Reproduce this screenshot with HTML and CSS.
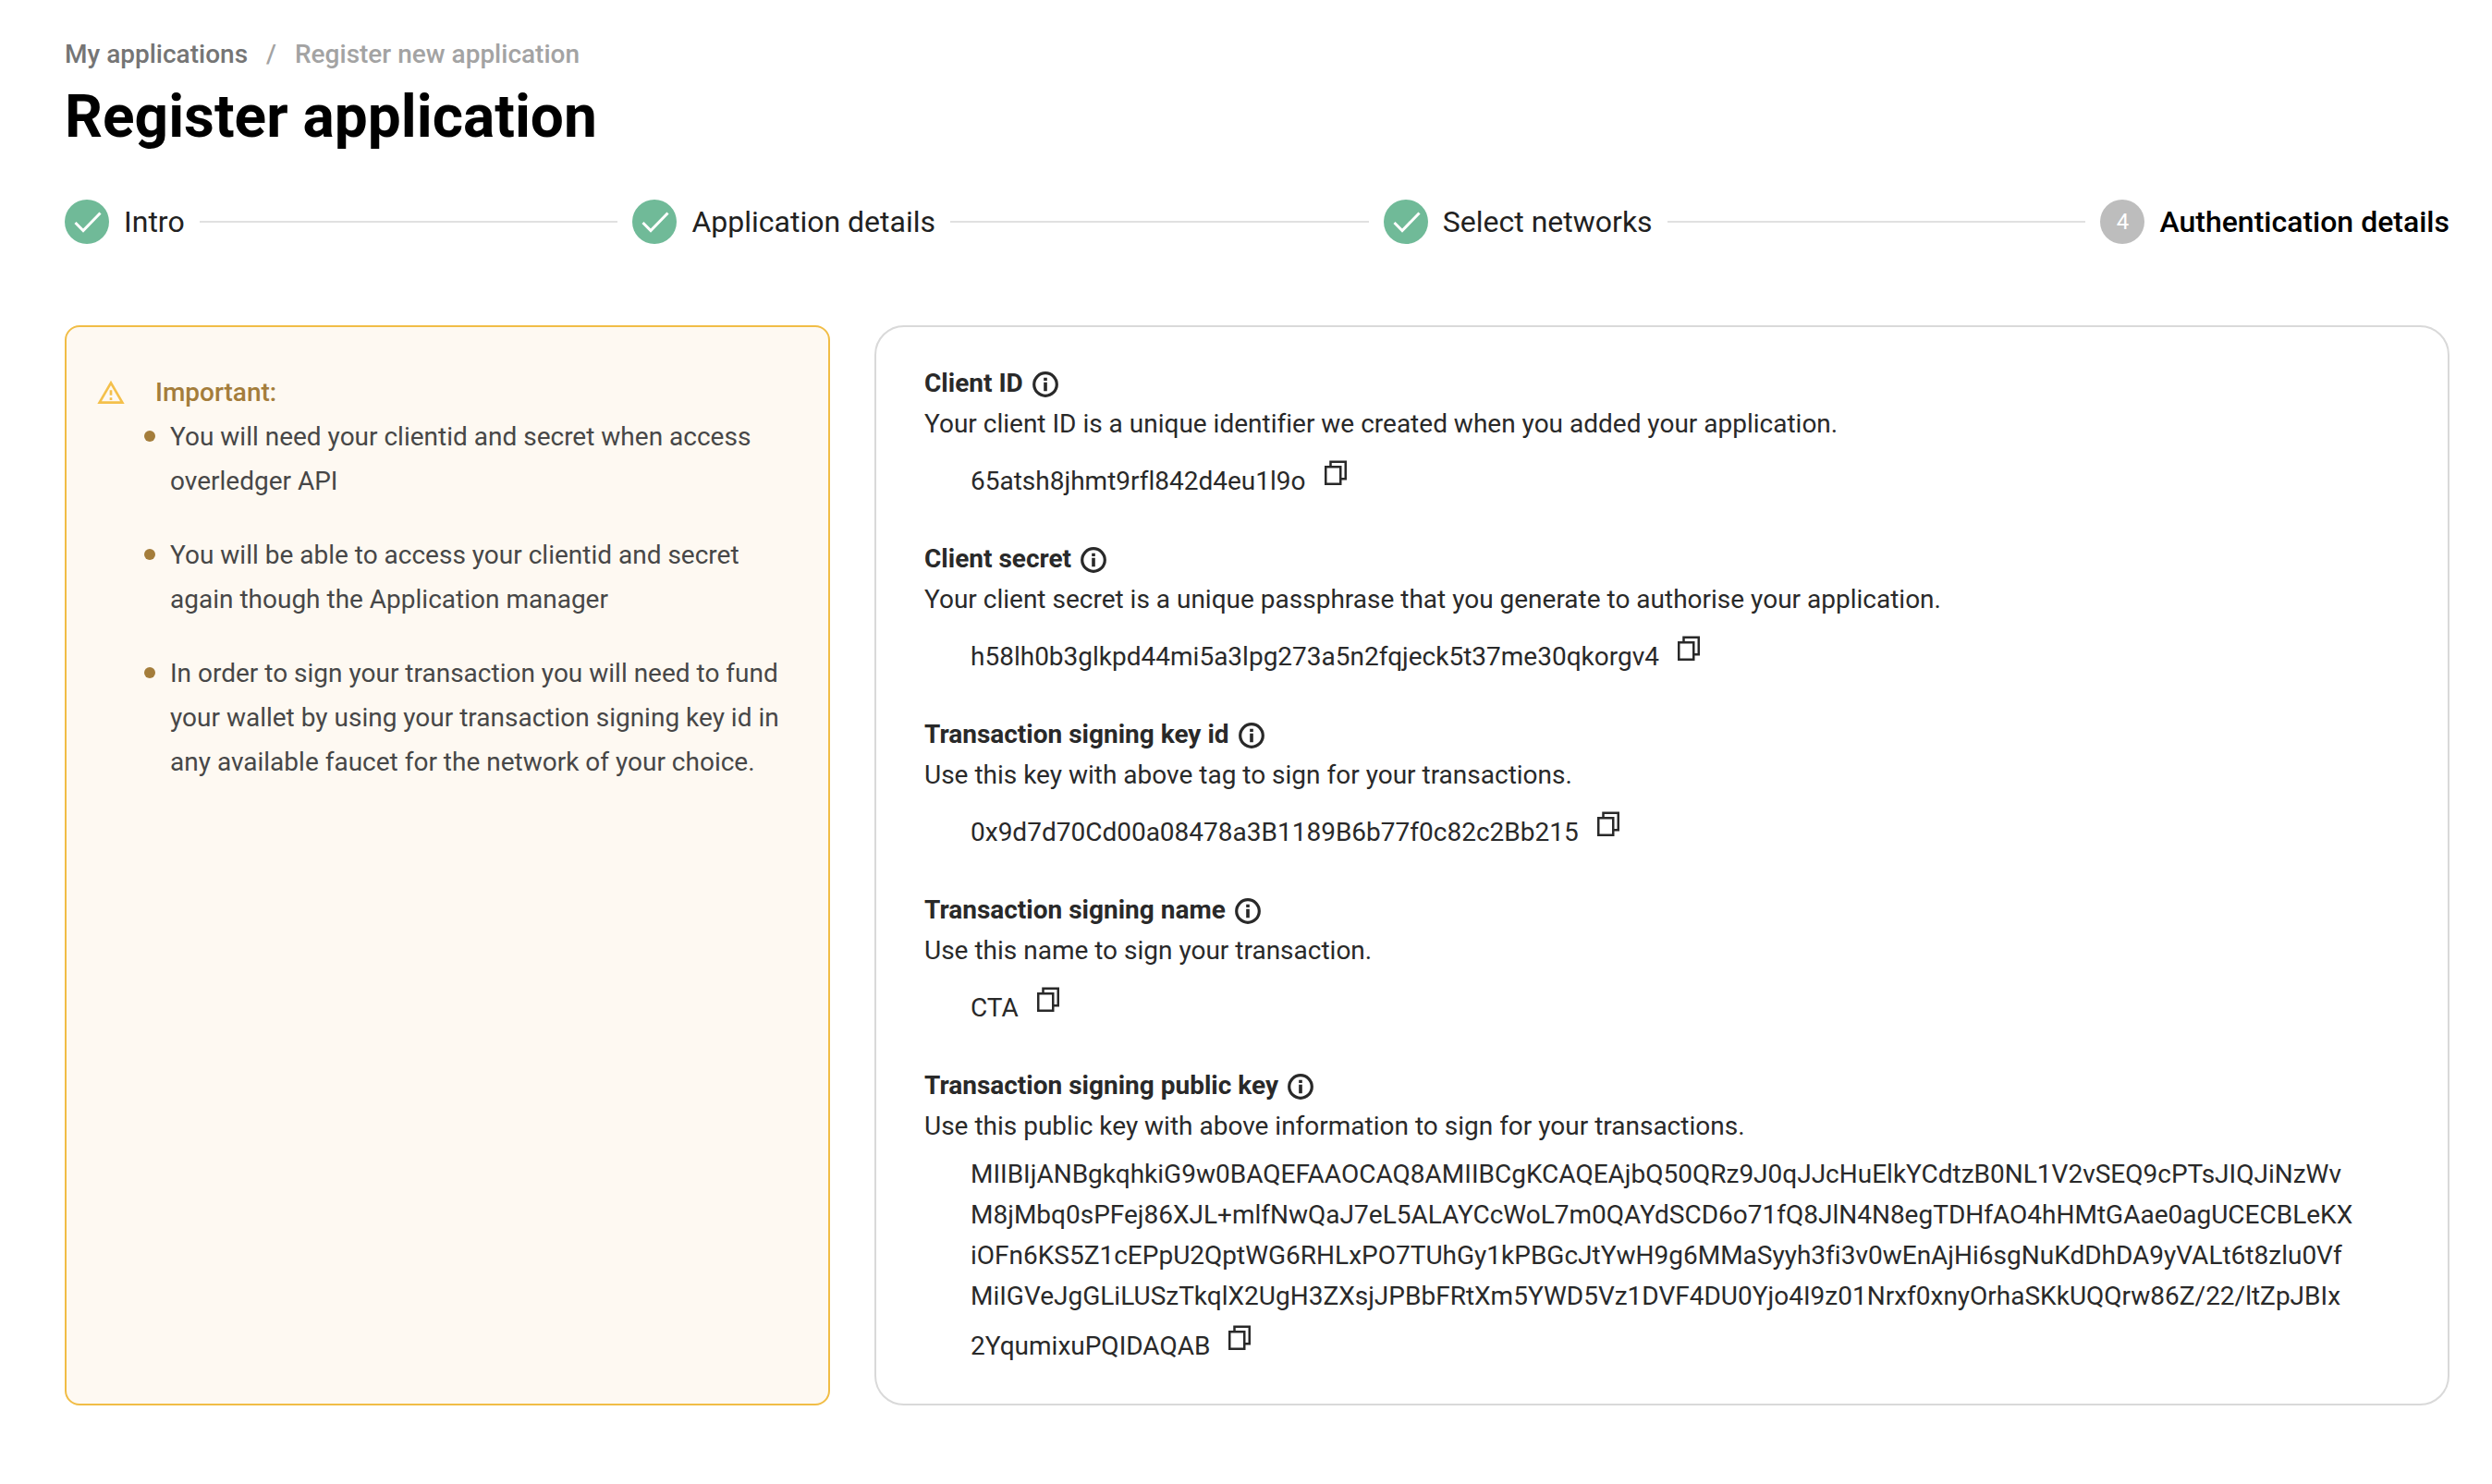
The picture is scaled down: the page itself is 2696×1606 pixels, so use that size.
FILE: index.html
```html
<!DOCTYPE html>
<html lang="en">
<head>
<meta charset="utf-8">
<title>Register application</title>
<link rel="stylesheet" href="styles.css">
</head>
<body>
<svg class="sprite" aria-hidden="true">
  <symbol id="check" viewBox="0 0 48 48"><path d="M11.500 25l8.500 8.500 18.500-19" fill="none" stroke="currentColor" stroke-width="3"/></symbol>
  <symbol id="info" viewBox="0 0 28 28"><circle cx="14" cy="14" r="12.300" fill="none" stroke="currentColor" stroke-width="3.200"/><path fill="currentColor" d="M12.200 6.700h3.600v3.400h-3.600zM12.200 11.800h3.600v9.500h-3.600z"/></symbol>
  <symbol id="copy" viewBox="0 0 24 32"><path d="M1.250 7.250h16v18.500h-16zM6.500 7V1.750h16.250v18.500H18" fill="none" stroke="currentColor" stroke-width="2.500"/></symbol>
</svg>
<main class="page">
  <nav class="breadcrumb" aria-label="Breadcrumb">
    <a class="breadcrumb-link" href="#">My applications</a>
    <span>/</span>
    <span>Register new application</span>
  </nav>
  <h1 class="title">Register application</h1>

  <ol class="stepper">
    <li class="step"><span class="step-badge"><svg class="step-check"><use href="#check"/></svg></span>Intro</li>
    <li class="step-line" role="presentation"></li>
    <li class="step"><span class="step-badge"><svg class="step-check"><use href="#check"/></svg></span>Application details</li>
    <li class="step-line" role="presentation"></li>
    <li class="step"><span class="step-badge"><svg class="step-check"><use href="#check"/></svg></span>Select networks</li>
    <li class="step-line" role="presentation"></li>
    <li class="step step-current" aria-current="step"><span class="step-badge">4</span>Authentication details</li>
  </ol>

  <div class="panels">
    <aside class="notice">
      <div class="notice-head">
        <svg class="notice-icon" viewBox="0 0 24 24" aria-hidden="true"><path fill="currentColor" d="M12 5.990L19.530 19H4.470L12 5.990M12 2L1 21h22L12 2zm1 14h-2v2h2v-2zm0-6h-2v4h2v-4z"/></svg>
        <h2 class="notice-title">Important:</h2>
      </div>
      <ul class="notice-list">
        <li class="notice-item">You will need your clientid and secret when access overledger API</li>
        <li class="notice-item">You will be able to access your clientid and secret again though the Application manager</li>
        <li class="notice-item">In order to sign your transaction you will need to fund your wallet by using your transaction signing key id in any available faucet for the network of your choice.</li>
      </ul>
    </aside>

    <section class="details">
      <div class="field">
        <h3 class="field-title">Client ID <svg class="info"><use href="#info"/></svg></h3>
        <p class="field-help">Your client ID is a unique identifier we created when you added your application.</p>
        <p class="field-value">65atsh8jhmt9rfl842d4eu1l9o<button class="copy" type="button" aria-label="Copy client ID"><svg class="copy-icon"><use href="#copy"/></svg></button></p>
      </div>
      <div class="field">
        <h3 class="field-title">Client secret <svg class="info"><use href="#info"/></svg></h3>
        <p class="field-help">Your client secret is a unique passphrase that you generate to authorise your application.</p>
        <p class="field-value">h58lh0b3glkpd44mi5a3lpg273a5n2fqjeck5t37me30qkorgv4<button class="copy" type="button" aria-label="Copy client secret"><svg class="copy-icon"><use href="#copy"/></svg></button></p>
      </div>
      <div class="field">
        <h3 class="field-title">Transaction signing key id <svg class="info"><use href="#info"/></svg></h3>
        <p class="field-help">Use this key with above tag to sign for your transactions.</p>
        <p class="field-value">0x9d7d70Cd00a08478a3B1189B6b77f0c82c2Bb215<button class="copy" type="button" aria-label="Copy signing key id"><svg class="copy-icon"><use href="#copy"/></svg></button></p>
      </div>
      <div class="field">
        <h3 class="field-title">Transaction signing name <svg class="info"><use href="#info"/></svg></h3>
        <p class="field-help">Use this name to sign your transaction.</p>
        <p class="field-value">CTA<button class="copy" type="button" aria-label="Copy signing name"><svg class="copy-icon"><use href="#copy"/></svg></button></p>
      </div>
      <div class="field">
        <h3 class="field-title">Transaction signing public key <svg class="info"><use href="#info"/></svg></h3>
        <p class="field-help">Use this public key with above information to sign for your transactions.</p>
        <p class="field-value">MIIBIjANBgkqhkiG9w0BAQEFAAOCAQ8AMIIBCgKCAQEAjbQ50QRz9J0qJJcHuElkYCdtzB0NL1V2vSEQ9cPTsJIQJiNzWv<wbr>M8jMbq0sPFej86XJL+mlfNwQaJ7eL5ALAYCcWoL7m0QAYdSCD6o71fQ8JlN4N8egTDHfAO4hHMtGAae0agUCECBLeKX<wbr>iOFn6KS5Z1cEPpU2QptWG6RHLxPO7TUhGy1kPBGcJtYwH9g6MMaSyyh3fi3v0wEnAjHi6sgNuKdDhDA9yVALt6t8zlu0Vf<wbr>MiIGVeJgGLiLUSzTkqlX2UgH3ZXsjJPBbFRtXm5YWD5Vz1DVF4DU0Yjo4I9z01Nrxf0xnyOrhaSKkUQQrw86Z/22/ltZpJBIx<wbr>2YqumixuPQIDAQAB<button class="copy" type="button" aria-label="Copy public key"><svg class="copy-icon"><use href="#copy"/></svg></button></p>
      </div>
    </section>
  </div>
</main>
</body>
</html>
```
FILE: styles.css
```css
* { box-sizing: border-box; }
body {
  margin: 0;
  background: #fff;
  color: #292929;
  font-family: Roboto, "Liberation Sans", sans-serif;
  font-size: 28px;
  line-height: 44px;
  font-variant-ligatures: none;
}
h1, h2, h3, p, ol, ul { margin: 0; padding: 0; }
ol { list-style: none; }
.sprite { display: none; }
.page { padding: 37px 46px 84px 70px; }

.breadcrumb { display: flex; gap: 20px; font-weight: 500; color: #a3a3a3; }
.breadcrumb-link { color: #757575; text-decoration: none; }
.title { margin-top: 6px; font-size: 64px; line-height: 80px; font-weight: 700; color: #000; }

.stepper { display: flex; align-items: center; gap: 16px; margin-top: 49px; }
.step { display: flex; align-items: center; gap: 16px; font-size: 32px; line-height: 46px; color: #212121; }
.step-badge {
  display: flex; align-items: center; justify-content: center;
  width: 48px; height: 48px; border-radius: 50%;
  background: #70ba98; color: #fff; font-size: 24px;
}
.step-check { width: 48px; height: 48px; }
.step-current { color: #000; font-weight: 500; }
.step-current .step-badge { background: #bdbdbd; font-weight: 400; }
.step-line { flex: 1; height: 2px; background: #e0e0e0; }

.panels { display: grid; grid-template-columns: 828px 1fr; gap: 48px; margin-top: 88px; }
.notice { border: 2px solid #f1bd46; border-radius: 16px; background: #fef9f2; padding: 47px 32px; line-height: 48px; color: #474747; }
.notice-head { display: flex; align-items: center; gap: 32px; color: #a47d3b; }
.notice-icon { width: 32px; height: 32px; color: #f4c04b; }
.notice-title { font-size: 28px; font-weight: 500; }
.notice-list { list-style: none; display: grid; gap: 32px; padding-left: 52px; }
.notice-item { display: flex; gap: 16px; }
.notice-item::before { content: ""; flex: none; width: 12px; height: 12px; margin-top: 17px; border-radius: 50%; background: #a47d3b; }

.details { border: 2px solid #d9d9d9; border-radius: 32px; padding: 39px 52px 40px; display: grid; gap: 40px; align-content: start; }
.field-title { display: flex; align-items: center; gap: 10px; font-size: 28px; font-weight: 700; }
.info { width: 28px; height: 28px; margin-top: 2px; }
.field-value { margin-top: 8px; padding-left: 50px; }
.copy {
  display: inline-flex; align-items: flex-start;
  margin: 0 0 0 20px; padding: 9px 0 0;
  border: 0; background: none; color: inherit; vertical-align: baseline;
}
.copy-icon { width: 24px; height: 32px; }
```
